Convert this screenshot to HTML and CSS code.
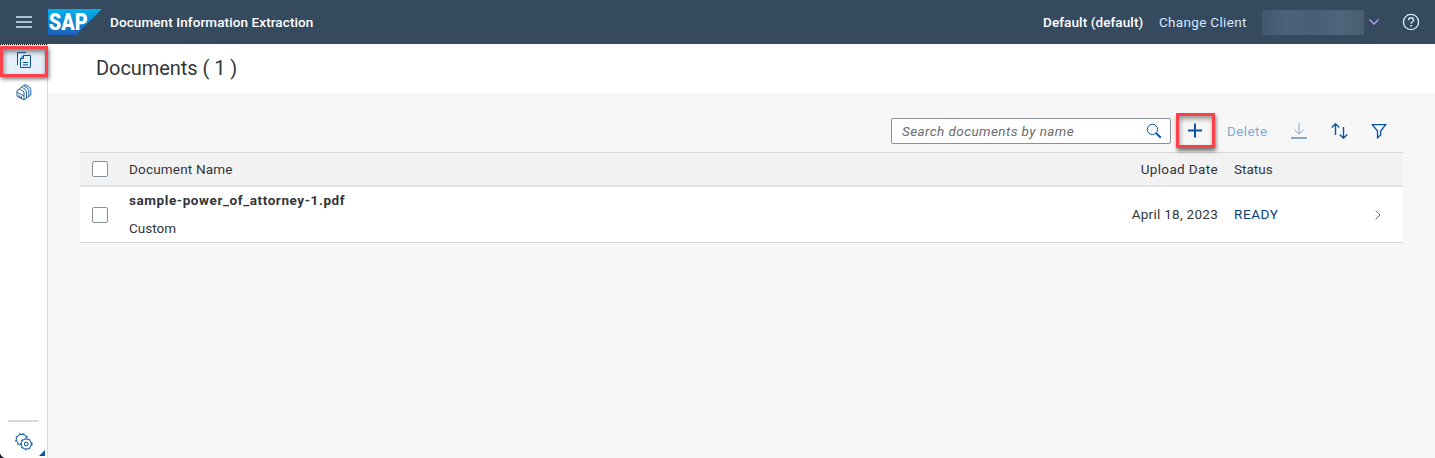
FILE: index.html
```html
<!DOCTYPE html>
<html lang="en">
<head>
<meta charset="utf-8">
<title>Document Information Extraction</title>
<link rel="stylesheet" href="styles.css">
</head>
<body>
<header class="shell">
  <svg class="menu" width="16" height="16" viewBox="0 0 16 16"><path d="M0 3h16M0 8h16M0 13h16"/></svg>
  <div class="logo">
    <svg width="54" height="26" viewBox="0 0 54 26"><defs><linearGradient id="g" x1="0" y1="0" x2="0" y2="1"><stop offset="0" stop-color="#00b2ee"/><stop offset="1" stop-color="#1e5fbb"/></linearGradient></defs><path d="M0 0h54L28 26H0z" fill="url(#g)"/><text x="0.8" y="21" textLength="39" lengthAdjust="spacingAndGlyphs">SAP</text></svg>
  </div>
  <span class="app-title">Document Information Extraction</span>
  <span class="tenant">Default (default)</span>
  <span class="change">Change Client</span>
  <span class="user"></span>
  <svg class="chev" width="10" height="6" viewBox="0 0 10 6"><path d="M.5.5 5 5 9.5.5"/></svg>
  <svg class="help" width="18" height="18" viewBox="0 0 18 18"><circle cx="9" cy="9" r="7.6"/><path d="M6.5 7.2C6.5 3.8 11.6 4 11.6 7c0 1.8-2.5 1.8-2.5 3.8"/><path d="M8.2 12.8h1.7"/></svg>
</header>
<div class="body">
  <nav class="side">
    <div class="nav-item selected">
      <svg width="16" height="17" viewBox="0 0 16 17"><path d="M1.5 13V.6H10M7.5 3.5H14.5v12H4.5V6.5z M7.5 3.5v3h-3M7 10.5h5M7 12.9h5"/></svg>
      <span class="mark"></span>
    </div>
    <div class="nav-item">
      <svg class="stack" width="16" height="17" viewBox="0 0 16 17"><path d="M1 6.5 3.5 4.8 8 7.8v8L1 12.2zM1 8.3l7 3.6M3 11v1.6l2.5 1.3v-1.6M3.5 4.8 5.5 3Q10.5 5 10.5 8v6L8 15.8M5.5 3l2-1.5Q12.8 3.8 12.8 6.5v6l-2.3 1.5M7.5 1.5 9 .7Q14.8 2.6 14.8 5.5v5.5l-2 1.5"/></svg>
    </div>
    <div class="side-foot">
      <svg width="18" height="18" viewBox="0 0 18 18"><circle cx="6.8" cy="6.6" r="5.3"/><circle class="teeth" cx="6.8" cy="6.6" r="6.2"/><circle class="cover" cx="11.2" cy="11" r="5.7"/><circle cx="11.2" cy="11" r="5"/><circle class="teeth" cx="11.2" cy="11" r="5.8"/><circle cx="11.2" cy="11" r="1.9"/></svg>
    </div>
    <span class="corner"></span><span class="dark-corner"></span>
  </nav>
  <main>
    <div class="heading"><h1>Documents ( 1 )</h1></div>
    <section class="content">
      <div class="toolbar">
        <div class="search"><span>Search documents by name</span>
          <svg width="16" height="16" viewBox="0 0 16 16"><circle cx="6.4" cy="6.4" r="5.1"/><path class="thick" d="m10.2 10.2 4.6 4.6"/></svg></div>
        <div class="add"><svg width="15" height="15" viewBox="0 0 15 15"><path d="M7 .5v14M0 7.5h14"/></svg></div>
        <span class="delete">Delete</span>
        <svg class="download" width="16" height="16" viewBox="0 0 16 16"><path d="M8 0v11M3.5 6.8 8 11l4.5-4.2"/><path class="base" d="M0 15h16"/></svg>
        <svg class="sort" width="17" height="16" viewBox="0 0 17 16"><path d="M4.5 12V1M.7 4.5 4.5.8l3.8 3.7M12.5 4v11M8.7 11.5l3.8 3.7 3.8-3.7"/></svg>
        <svg class="filter" width="16" height="16" viewBox="0 0 16 16"><path d="M1.3 1.6h13.4L9.7 8v4l-3.2 2.8V8z"/></svg>
      </div>
      <div class="table">
        <div class="row head"><span class="check"></span><span class="c-name"><span class="doc-label">Document Name</span></span><span class="c-date upload">Upload Date</span><span class="c-status">Status</span></div>
        <div class="row item"><span class="check"></span><span class="c-name"><b>sample-power_of_attorney-1.pdf</b><span>Custom</span></span><span class="c-date">April 18, 2023</span><span class="c-status ready">READY</span>
          <svg class="go" width="6" height="10" viewBox="0 0 6 10"><path d="M.6.6 5 5 .6 9.4"/></svg></div>
      </div>
    </section>
  </main>
</div>
</body>
</html>
```
FILE: styles.css
```css
* { box-sizing: border-box; }
body { margin: 0; height: 458px; overflow: hidden; display: flex; flex-direction: column; font: 13.5px/20px Roboto, "Liberation Sans", sans-serif; color: #32363a; background: #f7f7f7; white-space: nowrap; }
svg { display: block; fill: none; stroke: #0854a0; flex: none; }
.shell { height: 44px; flex: none; background: #354a5f; display: flex; align-items: center; padding: 0 15px 0 16px; color: #fff; font-weight: 500; letter-spacing: .1px; }
.menu { stroke: #d1e8ff; stroke-width: 1.6; }
.logo { margin: 0 8px 0 16px; }
.logo svg { stroke: none; }
.logo text { font: 900 23.5px Roboto, sans-serif; fill: #fff; letter-spacing: 0; }
.app-title { flex: 1; }
.tenant { width: 100px; }
.change { width: 88px; margin-left: 16px; color: #d1e8ff; font-weight: 400; letter-spacing: .32px; }
.user { width: 102px; height: 25px; margin-left: 15px; background: linear-gradient(90deg, #40566c, #4c6379 25%, #475d75 50%, #4e657b 75%, #465d72); }
.chev { margin-left: 5px; stroke: #b99af5; stroke-width: 1.3; }
.help { margin-left: 23px; stroke: #d1e8ff; stroke-width: 1.4; }
.body { flex: 1; display: flex; }
.side { width: 48px; background: #fff; border-right: 1px solid #d9d9d9; display: flex; flex-direction: column; position: relative; }
.nav-item { height: 32px; padding: 8px 0 0 16px; position: relative; }
.stack { stroke-width: .9; }
.selected { padding-top: 7px; background: #e5f0fa; border-top: 1px dotted #000; border-bottom: 1px dotted #000; }
.mark { position: absolute; left: 0; top: 1px; width: 48px; height: 31px; border: 3px solid #fa4049; box-shadow: 1px 2px 4px #0008, inset 1px 3px 5px #0007; }
.side-foot { margin: auto 8px 0; height: 38px; border-top: 2px solid #d9d9d9; padding: 11px 0 0 7px; }
.side-foot .teeth { stroke-dasharray: 2 2.2; }
.side-foot .cover { fill: #fff; stroke: none; }
.corner { position: absolute; left: 39px; bottom: 2px; border-left: 6px solid transparent; border-bottom: 6px solid #0854a0; }
.dark-corner { position: absolute; left: 0; bottom: 0; width: 6px; height: 6px; background: radial-gradient(circle at 6px 0, transparent 5.5px, #17162b 6.5px); }
main { flex: 1; }
.heading { height: 49px; background: #fff; padding: 12px 48px; }
h1 { margin: 0; font-size: 20px; line-height: 24px; font-weight: 400; letter-spacing: -.05px; }
.content { padding: 20px 32px; }
.toolbar { height: 39px; display: flex; align-items: flex-start; justify-content: flex-end; padding-right: 16px; }
.search { width: 280px; height: 26px; margin-top: 5px; background: #fff; border: 1px solid #89919a; border-radius: 2px; padding: 0 8px 0 10px; display: flex; align-items: center; justify-content: space-between; font-style: italic; color: #6a6d70; letter-spacing: .42px; }
.search .thick { stroke-width: 2; }
.add { width: 39px; height: 35px; margin-left: 5px; border: 3px solid #fa4049; display: grid; place-items: center; box-shadow: 1px 3px 4px #0008, inset 1px 3px 5px #0006; }
.add path { stroke-width: 2; }
.delete { margin: 8px 0 0 12px; width: 40px; color: #84aacf; letter-spacing: .4px; }
.download { margin: 10px 0 0 24px; stroke: #84aacf; }
.base { stroke-width: 2; }
.sort { margin: 10px 0 0 24px; stroke-width: 1.4; }
.filter { margin: 10px 0 0 23px; stroke-width: 1.3; }
.table { border-top: 1px solid #d9d9d9; }
.row { display: flex; align-items: center; padding-left: 12px; background: #fff; border-bottom: 1px solid #d9d9d9; }
.head { height: 34px; background: #f2f2f2; border-bottom: 2px solid #e4e4e4; }
.item { height: 56px; }
.check { width: 16px; height: 16px; background: #fff; border: 1px solid #89919a; border-radius: 2px; }
.c-name { flex: 1; margin-left: 21px; display: flex; flex-direction: column; align-items: flex-start; gap: 8px; }
.item .c-name, .item .c-date, .item .c-status { padding-bottom: 1px; }
.doc-label { letter-spacing: .18px; }
.c-name b { letter-spacing: .58px; }
.c-date { width: 120px; text-align: right; letter-spacing: .28px; }
.upload { letter-spacing: .36px; }
.c-status { width: 169px; margin-left: 16px; }
.ready { color: #0a3e78; width: 141px; letter-spacing: .6px; }
.go { margin-right: 22px; stroke: #6a6d70; }
```
